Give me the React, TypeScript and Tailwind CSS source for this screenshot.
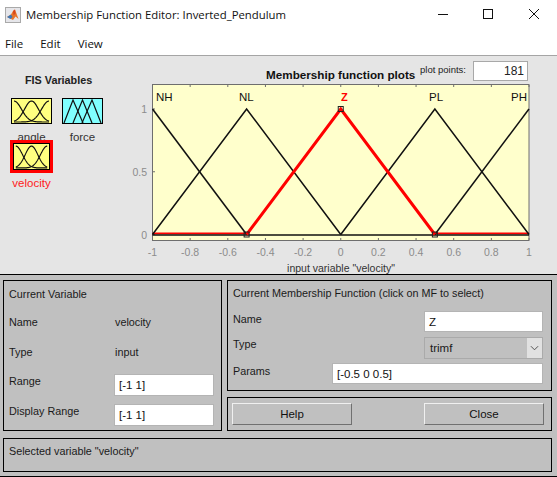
const gaussPath = (c: number, s: number) => {
  const pts: string[] = [];
  for (let x = 2; x <= 37; x += 0.5) {
    const d = (x - c) / s;
    pts.push(`${x},${(23 - 21 * Math.exp(-0.5 * d * d)).toFixed(2)}`);
  }
  return pts.join(" ");
};

const Mf = ({ kind }: { kind: "gauss" | "tri" }) => (
  <svg viewBox="0 0 39 24" preserveAspectRatio="none" className="w-full h-full block" fill="none" stroke="#111" strokeWidth="1.2">
    {kind === "gauss" ? (
      <>
        <polyline points={gaussPath(2, 7.5)} />
        <polyline points={gaussPath(19.5, 7)} />
        <polyline points={gaussPath(37, 7.5)} />
      </>
    ) : (
      <>
        <path d="M1 24 L10 1 L20 24" />
        <path d="M10 24 L19.5 1 L29 24" />
        <path d="M19 24 L29 1 L38 24" />
      </>
    )}
  </svg>
);

const X = (v: number) => 340.75 + v * 188.25;
const Y = (v: number) => 234.5 - v * 125.5;

const tri = (a: number, b: number, c: number) =>
  `${X(a)},${Y(0)} ${X(b)},${Y(1)} ${X(c)},${Y(0)}`;

const ticks = [-1, -0.8, -0.6, -0.4, -0.2, 0, 0.2, 0.4, 0.6, 0.8, 1];

const Plot = () => (
  <svg viewBox="120 83 437 191" className="w-[437px] h-[191px] block" style={{ fontFamily: "'Liberation Sans', sans-serif" }}>
    <rect x="152.5" y="84.5" width="376.5" height="156" fill="#ffffcc" stroke="#6e6e6e" strokeWidth="1" />
    {ticks.map((t) => (
      <g key={t}>
        <line x1={X(t)} x2={X(t)} y1="85" y2="87" stroke="#6e6e6e" />
        <line x1={X(t)} x2={X(t)} y1="238" y2="240" stroke="#6e6e6e" />
        <text x={X(t)} y="256" textAnchor="middle" fontSize="10.5" fill="#8c8c8c">
          {t}
        </text>
      </g>
    ))}
    {[0, 0.5, 1].map((t) => (
      <g key={t}>
        <line x1="153" x2="155" y1={Y(t)} y2={Y(t)} stroke="#6e6e6e" />
        <text x="147" y={Y(t) + 4} textAnchor="end" fontSize="10.5" fill="#8c8c8c">
          {t}
        </text>
      </g>
    ))}
    <line x1={X(-1)} x2={X(-0.5)} y1="233.4" y2="233.4" stroke="#ff0000" strokeWidth="1.6" />
    <line x1={X(0.5)} x2={X(1)} y1="233.4" y2="233.4" stroke="#ff0000" strokeWidth="1.6" />
    <g fill="none" stroke="#111" strokeWidth="1.5">
      <line x1={X(-1)} x2={X(1)} y1="235" y2="235" />
      <polyline points={`${X(-1)},${Y(1)} ${X(-0.5)},${Y(0)}`} />
      <polyline points={tri(-1, -0.5, 0)} />
      <polyline points={tri(0, 0.5, 1)} />
      <polyline points={`${X(0.5)},${Y(0)} ${X(1)},${Y(1)}`} />
    </g>
    <polyline points={tri(-0.5, 0, 0.5)} fill="none" stroke="#ff0000" strokeWidth="3" />
    {[[-0.5, 0], [0, 1], [0.5, 0]].map(([a, b]) => (
      <rect key={a} x={X(a) - 2.5} y={Y(b) - 2.5} width="5" height="5" fill="none" stroke="#222" strokeWidth="1" />
    ))}
    <g fontSize="11.5" fill="#111">
      <text x="156" y="101">NH</text>
      <text x="239" y="101">NL</text>
      <text x="341" y="101" fill="#ff0000" fontWeight="bold" fontSize="11">Z</text>
      <text x="429" y="101">PL</text>
      <text x="511" y="101">PH</text>
    </g>
    <text x="341" y="272" textAnchor="middle" fontSize="10.5" fill="#333">input variable "velocity"</text>
  </svg>
);

const Panel = ({ className, children }: { className: string; children?: React.ReactNode }) => (
  <div className={`border border-black ${className}`}>{children}</div>
);

const Field = ({ className, children }: { className: string; children: React.ReactNode }) => (
  <div className={`bg-white border border-[#b4b4b4] flex items-center text-[#111] text-[11.5px] ${className}`}>{children}</div>
);

const Btn = ({ className, children }: { className: string; children: React.ReactNode }) => (
  <div
    className={`h-[22px] bg-[#c0c0c0] border border-t-[#f0f0f0] border-l-[#f0f0f0] border-r-[#707070] border-b-[#707070] flex items-center justify-center text-[#111] text-[11.5px] ${className}`}
  >
    {children}
  </div>
);

export default function App() {
  return (
    <div className="w-[557px] h-[477px] bg-white overflow-hidden flex flex-col text-[12px] leading-[14px] font-['Liberation_Sans',sans-serif]">
      <div className="h-[33px] flex items-center shrink-0">
        <svg viewBox="0 0 16 16" className="w-[16px] h-[16px] ml-[5px] mt-[-3px]">
          <rect x="0.5" y="0.5" width="15" height="15" fill="#e6e6ea" stroke="#a9a9a9" />
          <path d="M2 10 L6 7.5 L8 4 L10 2.5 L13.5 12 L10.5 9.5 L8 13 Z" fill="#e8742a" />
          <path d="M2 10 L6 7.5 L7.5 10 L5.5 12 Z" fill="#3b78b8" />
          <path d="M8 4 L10 2.5 L10.5 7 L8.5 8 Z" fill="#d8471c" />
        </svg>
        <span className="ml-[5px] mt-[-3px] text-[11.35px] text-[#111] font-['Open_Sans',sans-serif]">Membership Function Editor: Inverted_Pendulum</span>
        <div className="flex-1" />
        <svg viewBox="0 0 119 16" className="w-[119px] h-[16px] mt-[-5px]" fill="none" stroke="#111" strokeWidth="1">
          <line x1="0" x2="10" y1="8.5" y2="8.5" />
          <rect x="45.5" y="3.5" width="9" height="9" />
          <path d="M91 3 L101 13 M101 3 L91 13" />
        </svg>
      </div>
      <div className="h-[22px] flex items-center shrink-0 gap-[17px] pl-[5px] text-[11.5px] text-[#111] font-['Open_Sans',sans-serif]">
        <span>File</span>
        <span>Edit</span>
        <span>View</span>
      </div>
      <div className="h-[1px] bg-[#a5a5a5] shrink-0" />
      <div className="h-[218px] bg-[#e5e5e5] flex shrink-0 border-b border-black box-content">
        <div className="w-[120px] shrink-0 flex flex-col text-[11.5px]">
          <div className="pl-[25px] mt-[17px] h-[14px] font-bold text-[#222] text-[10.8px]">FIS Variables</div>
          <div className="flex pl-[11px] gap-[10px] mt-[11px]">
            <div className="w-[41px]">
              <div className="h-[26px] bg-[#ffff80] border border-black"><Mf kind="gauss" /></div>
              <div className="text-center mt-[6px] h-[10px] text-[#333]">angle</div>
            </div>
            <div className="w-[41px]">
              <div className="h-[26px] bg-[#80ffff] border border-black"><Mf kind="tri" /></div>
              <div className="text-center mt-[6px] h-[10px] text-[#333]">force</div>
            </div>
          </div>
          <div className="w-[43px] ml-[10px] relative">
            <div className="h-[33px] bg-[#ffff80] border-[3px] border-[#ff0000]">
              <div className="h-full border border-black"><Mf kind="gauss" /></div>
            </div>
            <div className="text-center mt-[3px] text-[#ff2020]">velocity</div>
          </div>
        </div>
        <div className="flex-1 flex flex-col">
          <div className="h-[27px] flex shrink-0">
            <div className="ml-[146px] mt-[12px] font-bold text-[11.7px] text-[#111] whitespace-nowrap w-[150px]">Membership function plots</div>
            <div className="ml-[4px] mt-[7px] text-[9.5px] text-[#222] whitespace-nowrap w-[46px]">plot points:</div>
            <div className="ml-[7px] mt-[5px] w-[55px] h-[20px] bg-white border border-[#a8a8a8] flex items-center justify-end pr-[3px] text-[#222]">181</div>
          </div>
          <Plot />
        </div>
      </div>
      <div className="flex-1 bg-[#c0c0c0] border-b border-black px-[3px] pt-[5px] flex flex-col text-[#1a1a1a] text-[10.8px]">
        <div className="flex gap-[5px] h-[152px]">
          <Panel className="w-[219px] h-[151px] px-[5px] flex flex-col">
            <div className="h-[25px] flex items-center">Current Variable</div>
            <div className="h-[31px] flex items-center"><span className="w-[106px]">Name</span><span>velocity</span></div>
            <div className="h-[29px] flex items-center"><span className="w-[106px]">Type</span><span>input</span></div>
            <div className="h-[30px] flex items-start"><span className="w-[105px] mt-[8px]">Range</span><Field className="w-[100px] h-[22px] mt-[8px] pl-[4px]">[-1 1]</Field></div>
            <div className="h-[30px] flex items-start"><span className="w-[105px] mt-[8px]">Display Range</span><Field className="w-[100px] h-[22px] mt-[8px] pl-[4px]">[-1 1]</Field></div>
          </Panel>
          <div className="w-[325px] flex flex-col gap-[6px]">
            <Panel className="h-[111px] px-[5px] flex flex-col">
              <div className="h-[23px] mb-[2px] flex items-center">Current Membership Function (click on MF to select)</div>
              <div className="h-[26px] flex items-start">
                <span className="w-[191px] mt-[3px] leading-[20px]">Name</span>
                <Field className="w-[119px] h-[21px] pl-[4px] mt-[5px]">Z</Field>
              </div>
              <div className="h-[26px] flex items-start">
                <span className="w-[191px] mt-[2px] leading-[20px]">Type</span>
                <div className="w-[119px] h-[22px] mt-[5px] border border-[#aaa] bg-[#c0c0c0] flex items-center pl-[5px] relative text-[11.5px]">
                  trimf
                  <div className="absolute right-0 top-0 bottom-0 w-[15px] bg-[#e1e1e1] flex items-center justify-center">
                    <svg viewBox="0 0 10 6" className="w-[9px] h-[6px]" fill="none" stroke="#444"><path d="M1 1 L5 5 L9 1" /></svg>
                  </div>
                </div>
              </div>
              <div className="h-[26px] flex items-start">
                <span className="w-[99px] mt-[3px] leading-[20px]">Params</span>
                <Field className="w-[211px] h-[21px] pl-[4px] mt-[5px]">[-0.5 0 0.5]</Field>
              </div>
            </Panel>
            <Panel className="h-[34px] px-[4px] flex items-center justify-between">
              <Btn className="w-[120px]">Help</Btn>
              <Btn className="w-[120px] mr-[3px]">Close</Btn>
            </Panel>
          </div>
        </div>
        <Panel className="mt-[6px] h-[34px] w-[549px] px-[5px] pt-[5px]">Selected variable "velocity"</Panel>
      </div>
    </div>
  );
}
